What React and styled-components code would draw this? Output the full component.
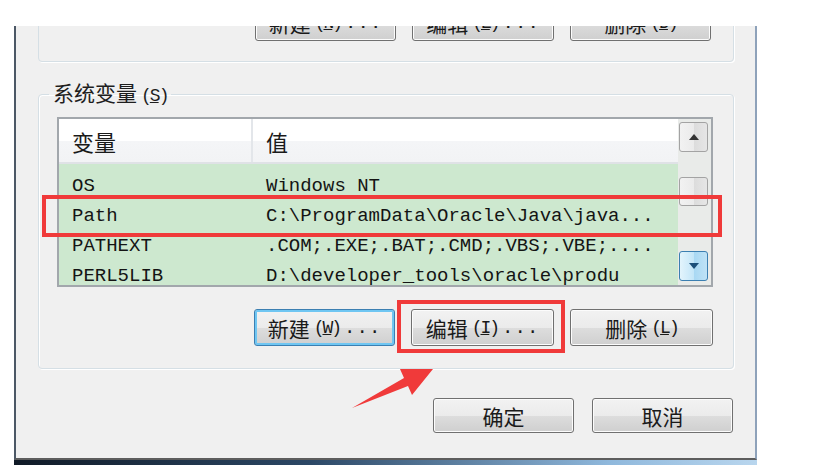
import styled, { createGlobalStyle } from "styled-components";

const rows = [
    { name: "OS", value: "Windows NT" },
    { name: "Path", value: "C:\\ProgramData\\Oracle\\Java\\java..." },
    { name: "PATHEXT", value: ".COM;.EXE;.BAT;.CMD;.VBS;.VBE;...." },
    { name: "PERL5LIB", value: "D:\\developer_tools\\oracle\\produ" },
];

function Label({ text, keyChar, dots }) {
    return (
        <>
            <span>{text}</span>
            <Mnemonic>(<u>{keyChar}</u>)</Mnemonic>
            {dots && <Dots>...</Dots>}
        </>
    );
}

export default function App() {
    return (
        <>
            <GlobalStyle />
            <Stage>
                <Window>
                    <UpperGroup>
                        <Button $w={141}><Label text="新建" keyChar="N" dots /></Button>
                        <Button $w={142}><Label text="编辑" keyChar="E" dots /></Button>
                        <Button $w={141}><Label text="删除" keyChar="D" /></Button>
                    </UpperGroup>

                    <Group>
                        <Legend>系统变量<Mnemonic>(<u>S</u>)</Mnemonic></Legend>
                        <ListView>
                            <ListBody>
                                <Header>
                                    <HeadCell $w={194}>变量</HeadCell>
                                    <HeadCell>值</HeadCell>
                                </Header>
                                <Rows>
                                    {rows.map((r) => (
                                        <Row key={r.name}>
                                            <Cell $w={194}>{r.name}</Cell>
                                            <Cell>{r.value}</Cell>
                                        </Row>
                                    ))}
                                </Rows>
                            </ListBody>
                            <ScrollBar>
                                <ScrollButton>
                                    <svg width="12" height="8" viewBox="0 0 12 8">
                                        <path d="M1 7 L6 1 L11 7 Z" fill="#333" />
                                    </svg>
                                </ScrollButton>
                                <Thumb />
                                <Spacer />
                                <ScrollButton $hover>
                                    <svg width="12" height="8" viewBox="0 0 12 8">
                                        <path d="M1 1 L11 1 L6 7 Z" fill="#1c4f79" />
                                    </svg>
                                </ScrollButton>
                            </ScrollBar>
                        </ListView>
                        <ButtonRow>
                            <Button $w={141} $default><Label text="新建" keyChar="W" dots /></Button>
                            <Button $w={143}><Label text="编辑" keyChar="I" dots /></Button>
                            <Button $w={143}><Label text="删除" keyChar="L" /></Button>
                        </ButtonRow>
                    </Group>

                    <DialogButtons>
                        <Button $w={141} $h={35}>确定</Button>
                        <Button $w={141} $h={35}>取消</Button>
                    </DialogButtons>
                </Window>
                <TaskStrip />

                <Highlight style={{ left: 42, top: 195, width: 680, height: 42 }} />
                <Highlight style={{ left: 397, top: 300, width: 168, height: 53 }} />
                <Arrow width="813" height="465" viewBox="0 0 813 465">
                    <polygon points="352,408 404,378 400,369 433,369 412,395 408,386" fill="#f03a3a" />
                </Arrow>
            </Stage>
        </>
    );
}

const GlobalStyle = createGlobalStyle`
    html, body {
        margin: 0;
        padding: 0;
        background: #fff;
    }
    body {
        font-family: "Noto Sans CJK SC", sans-serif;
        color: #1a1a1a;
    }
`;

const Stage = styled.div`
    position: relative;
    width: 813px;
    height: 465px;
    overflow: hidden;
    padding: 26px 0 0 14px;
    box-sizing: border-box;
`;

const Window = styled.div`
    width: 743px;
    height: 434px;
    box-sizing: border-box;
    background: #f0f0f0;
    border-left: 2px solid #4c5866;
    border-right: 2px solid #8ea2ba;
    border-bottom: 2px solid #5d5d5d;
    padding: 0 21px 0 22px;
    overflow: hidden;
    display: flex;
    flex-direction: column;
`;

const TaskStrip = styled.div`
    width: 743px;
    height: 5px;
    background: linear-gradient(90deg, #101a26 0%, #2c4866 40%, #8fb8dc 80%, #b9d6ee 100%);
`;

const UpperGroup = styled.div`
    margin-top: -41px;
    border: 1px solid #d5dfe5;
    border-radius: 4px;
    box-shadow: 1px 1px 0 #fff;
    padding: 18px 22px 20px 0;
    display: flex;
    justify-content: flex-end;
    gap: 16px;
`;

const Group = styled.fieldset`
    margin: 15px 0 0;
    padding: 6px 20px 22px 18px;
    border: 1px solid #d5dfe5;
    border-radius: 4px;
    box-shadow: 1px 1px 0 #fff, inset 1px 1px 0 #fff;
    min-width: 0;
`;

const Legend = styled.legend`
    padding: 0 4px;
    margin-left: -8px;
    font-size: 21px;
    line-height: 30px;
    color: #1e1e1e;
`;

const Mnemonic = styled.span`
    font-family: "Liberation Mono", monospace;
    font-size: 18px;
    margin-left: 4px;
    letter-spacing: -2px;
`;

const Dots = styled.span`
    font-family: "Liberation Mono", monospace;
    font-size: 19px;
    letter-spacing: 1px;
    margin-left: 4px;
`;

const ListView = styled.div`
    height: 170px;
    box-sizing: border-box;
    border: 2px solid #a2a7ac;
    display: flex;
    background: #cde8cf;
    overflow: hidden;
`;

const ListBody = styled.div`
    flex: 1;
    display: flex;
    flex-direction: column;
    min-width: 0;
`;

const Header = styled.div`
    height: 45px;
    flex: none;
    display: flex;
    background: linear-gradient(#ffffff 0%, #ffffff 50%, #f4f5f7 52%, #f2f3f5 100%);
    border-bottom: 2px solid #dfe2e6;
    box-sizing: border-box;
`;

const HeadCell = styled.div`
    width: ${(p) => (p.$w ? `${p.$w}px` : "auto")};
    flex: ${(p) => (p.$w ? "none" : "1")};
    box-sizing: border-box;
    padding-left: 13px;
    display: flex;
    align-items: center;
    font-size: 22px;
    color: #1a1a1a;
    border-right: ${(p) => (p.$w ? "2px solid #e3e6ea" : "none")};
`;

const Rows = styled.div`
    padding-top: 7px;
`;

const Row = styled.div`
    height: 30px;
    display: flex;
    align-items: center;
    font-family: "Liberation Mono", monospace;
    font-size: 19px;
    color: #141414;
    white-space: nowrap;
`;

const Cell = styled.div`
    width: ${(p) => (p.$w ? `${p.$w}px` : "auto")};
    flex: ${(p) => (p.$w ? "none" : "1")};
    padding-left: 13px;
    box-sizing: border-box;
    overflow: hidden;
`;

const ScrollBar = styled.div`
    width: 33px;
    flex: none;
    background: #e9ebe9;
    padding: 3px 3px 4px 1px;
    box-sizing: border-box;
    display: flex;
    flex-direction: column;
`;

const ScrollButton = styled.div`
    height: 30px;
    flex: none;
    box-sizing: border-box;
    border-radius: 3px;
    border: 1px solid ${(p) => (p.$hover ? "#3c7fb1" : "#a3a3a3")};
    background: ${(p) =>
        p.$hover
            ? "linear-gradient(90deg, #e3f4fc 0%, #c4e6f8 50%, #a8d8f3 52%, #bfe2f6 100%)"
            : "linear-gradient(90deg, #f2f2f2 0%, #ebebeb 50%, #dcdcdc 52%, #e6e6e6 100%)"};
    display: flex;
    align-items: center;
    justify-content: center;
`;

const Thumb = styled(ScrollButton)`
    margin-top: 25px;
    height: 29px;
`;

const Spacer = styled.div`
    flex: 1;
`;

const ButtonRow = styled.div`
    margin-top: 22px;
    display: flex;
    justify-content: flex-end;
    gap: 16px;
`;

const DialogButtons = styled.div`
    margin-top: 29px;
    display: flex;
    justify-content: flex-end;
    gap: 18px;
    padding-right: 1px;
`;

const Button = styled.div`
    width: ${(p) => p.$w}px;
    height: ${(p) => p.$h || 37}px;
    box-sizing: border-box;
    flex: none;
    border: 1px solid ${(p) => (p.$default ? "#3c7fb1" : "#707070")};
    border-radius: 3px;
    background: linear-gradient(#f2f2f2 0%, #ebebeb 50%, #dddddd 51%, #cfcfcf 100%);
    box-shadow: ${(p) => (p.$default ? "inset 0 0 0 2px #6fc6f2" : "inset 0 0 0 1px #fcfcfc")};
    display: flex;
    align-items: center;
    justify-content: center;
    font-size: 21px;
    color: #1a1a1a;
    white-space: nowrap;
`;

const Highlight = styled.div`
    position: absolute;
    box-sizing: border-box;
    border: 4px solid #f03a3a;
    pointer-events: none;
`;

const Arrow = styled.svg`
    position: absolute;
    left: 0;
    top: 0;
    pointer-events: none;
`;
